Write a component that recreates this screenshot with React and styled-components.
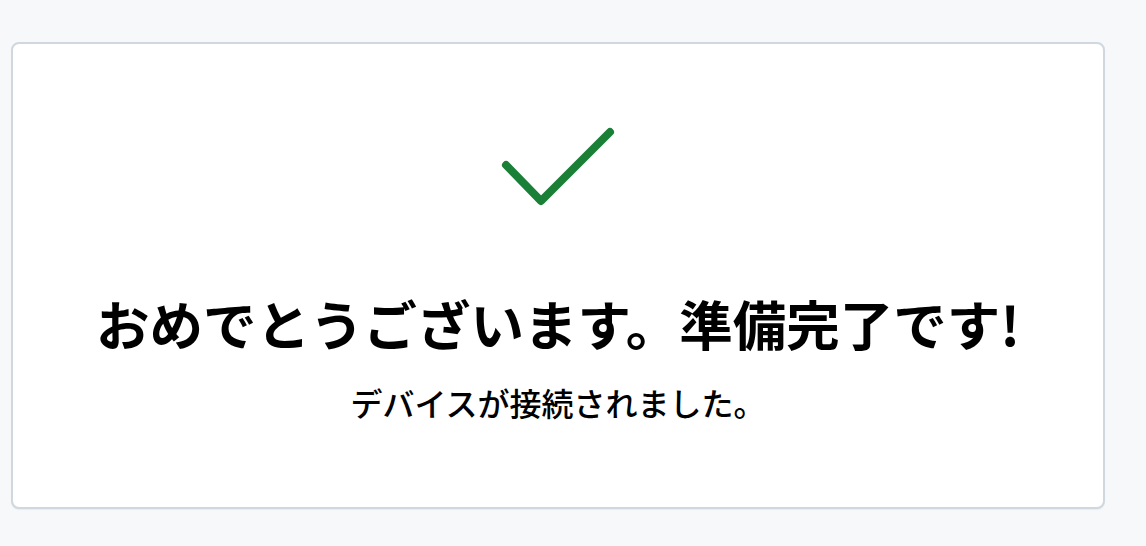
import React from 'react';
import styled, { createGlobalStyle } from 'styled-components';

const GlobalStyle = createGlobalStyle`
  body {
    margin: 0;
    background: #f6f8fa;
    font-family: 'Noto Sans CJK JP', 'Noto Sans', sans-serif;
    color: #000;
  }
`;

const Page = styled.div`
  padding: 42px 41px 0 11px;
  height: 546px;
  box-sizing: border-box;
`;

const Card = styled.div`
  height: 467px;
  box-sizing: border-box;
  background: #fff;
  border: 2px solid #d0d7de;
  border-radius: 8px;
  box-shadow: 0 1px 1px rgba(31, 35, 40, 0.06);
  display: flex;
  flex-direction: column;
  align-items: center;
  padding-top: 78px;
`;

const Check = styled.svg`
  width: 125px;
  height: 90px;
  display: block;
`;

const Title = styled.h1`
  margin: 78px 0 0;
  font-size: 53.5px;
  line-height: 65px;
  font-weight: 700;
`;

const Message = styled.p`
  margin: 25px 0 0;
  font-size: 32px;
  line-height: 44px;
  font-weight: 500;
`;

export default function App() {
  return (
    <Page>
      <GlobalStyle />
      <Card>
        <Check viewBox="0 0 125 90">
          <polyline
            points="10,43 45,79 114,10"
            fill="none"
            stroke="#1a7f37"
            strokeWidth="8"
            strokeLinecap="round"
            strokeLinejoin="round"
          />
        </Check>
        <Title>おめでとうございます。準備完了です!</Title>
        <Message>デバイスが接続されました。</Message>
      </Card>
    </Page>
  );
}
